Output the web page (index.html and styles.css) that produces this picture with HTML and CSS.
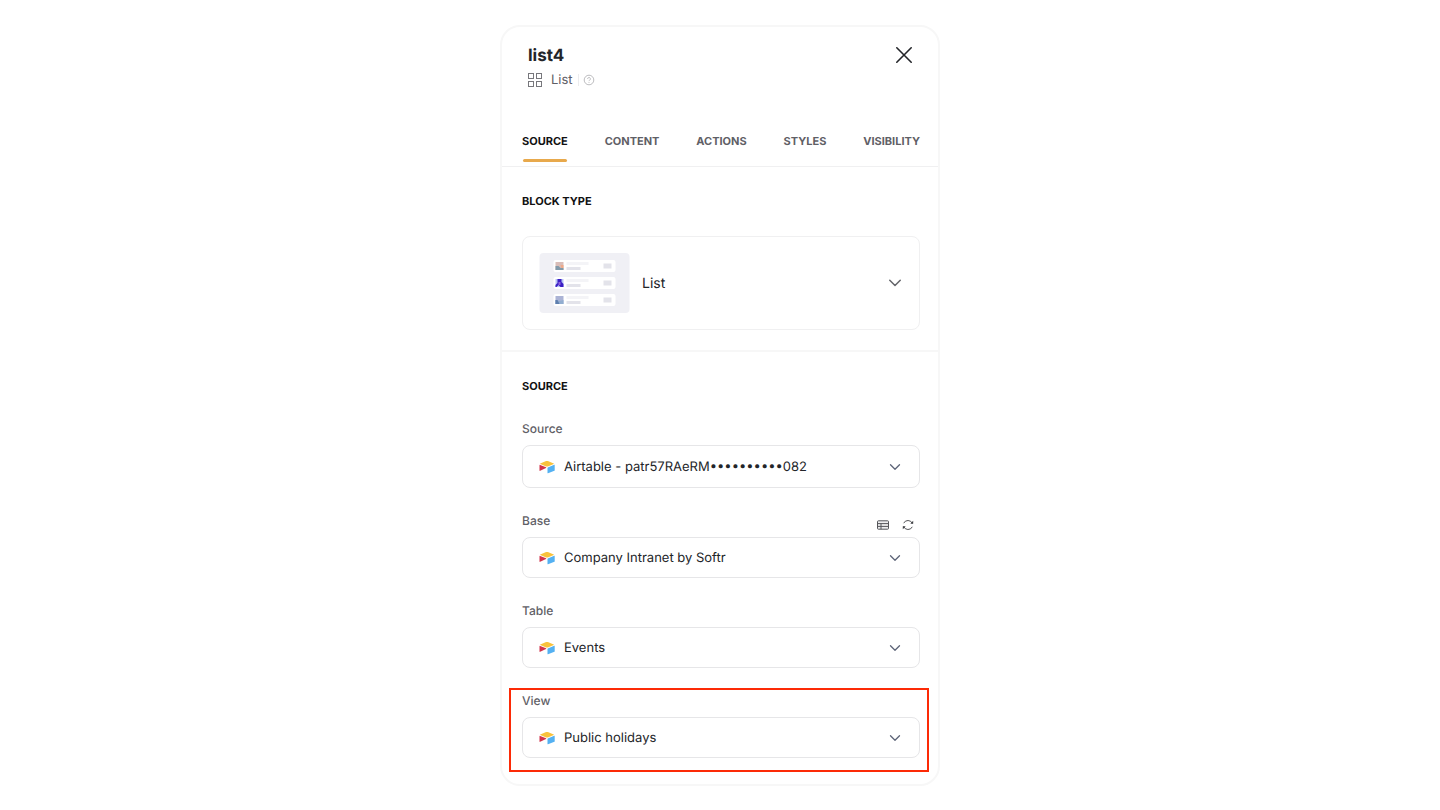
FILE: index.html
```html
<!DOCTYPE html>
<html lang="en">
<head>
  <meta charset="utf-8">
  <meta name="viewport" content="width=device-width, initial-scale=1.0">
  <title>list4</title>
  <link rel="stylesheet" href="styles.css">
</head>
<body>

  <!-- Shared icons -->
  <svg class="sprite" aria-hidden="true">
    <symbol id="airtable" viewBox="0 0 16 14">
      <path d="M7.1 1.1 1.3 3.4c-.4.2-.4.6 0 .7l5.8 2.3c.6.2 1.2.2 1.8 0l5.8-2.3c.4-.2.4-.6 0-.7L8.9 1.1a2.5 2.5 0 0 0-1.8 0z" fill="#f8c23c"/>
      <path d="M8.5 7.8v5.1c0 .3.3.5.5.4l6.4-2.5c.2-.1.3-.2.3-.4V5.2c0-.3-.3-.5-.5-.4L8.8 7.4c-.2.1-.3.2-.3.4z" fill="#54b1f2"/>
      <path d="M7 8 1.2 10.800c-.3.2-.7 0-.7-.4V5.300c0-.4.3-.6.7-.4L7 7.300c.4.200.4.500 0 .7z" fill="#d2324a"/>
    </symbol>
    <symbol id="chevron" viewBox="0 0 12 12">
      <path d="M1.500 3.700 6 8.200l4.500-4.500" fill="none" stroke="currentColor" stroke-width="1.300" stroke-linecap="round" stroke-linejoin="round"/>
    </symbol>
  </svg>

  <main class="panel">
    <header class="panel-header">
      <div>
        <h1>list4</h1>
        <div class="block-name">
          <svg class="grid-icon" viewBox="0 0 14 14" fill="none" stroke="#77777c">
            <rect x="0.500" y="0.500" width="5" height="5"/>
            <rect x="8.500" y="0.500" width="5" height="5"/>
            <rect x="0.500" y="8.500" width="5" height="5"/>
            <rect x="8.500" y="8.500" width="5" height="5"/>
          </svg>
          <span class="block-label">List</span>
          <button class="help" aria-label="Help">
            <svg viewBox="0 0 12 12" fill="none" stroke="#b4b4b8">
              <circle cx="6" cy="6" r="4.800" stroke-width="0.900"/>
              <path d="M4.600 4.900a1.400 1.400 0 1 1 2.100 1.200c-.5.300-.7.500-.7 1M6 8v.8" stroke-width="0.900"/>
            </svg>
          </button>
        </div>
      </div>
      <button class="close" aria-label="Close">
        <svg viewBox="0 0 18 18" fill="none" stroke="#232529" stroke-width="1.600" stroke-linecap="round">
          <path d="M1.800 1.800 16.200 16.200M16.200 1.800 1.800 16.200"/>
        </svg>
      </button>
    </header>

    <nav class="tabs">
      <button class="tab active">SOURCE</button>
      <button class="tab">CONTENT</button>
      <button class="tab">ACTIONS</button>
      <button class="tab">STYLES</button>
      <button class="tab">VISIBILITY</button>
    </nav>

    <section class="block-type">
      <h2><label for="block-type">BLOCK TYPE</label></h2>
      <div class="control card">
        <svg class="thumb" viewBox="0 0 90 60">
          <rect width="90" height="60" rx="4" fill="#f0f0f5"/>
          <g fill="#fff">
            <rect x="14" y="7" width="62" height="12" rx="2"/>
            <rect x="14" y="24" width="62" height="12" rx="2"/>
            <rect x="14" y="41" width="62" height="12" rx="2"/>
          </g>
          <g fill="#f4f4f7">
            <rect x="27" y="9" width="22" height="3"/>
            <rect x="27" y="26" width="22" height="3"/>
            <rect x="27" y="43" width="22" height="3"/>
          </g>
          <g fill="#e3e3ea">
            <rect x="27" y="14" width="14" height="3"/>
            <rect x="27" y="31" width="14" height="3"/>
            <rect x="27" y="48" width="14" height="3"/>
            <rect x="64" y="10.500" width="8" height="5"/>
            <rect x="64" y="27.500" width="8" height="5"/>
            <rect x="64" y="44.500" width="8" height="5"/>
          </g>
          <rect x="16" y="9" width="8" height="8" fill="#d9bdb7"/>
          <path d="M16 13h3l2 2h3v2h-8z" fill="#829aaa"/>
          <path d="M21 12h3v3h-2z" fill="#efa988"/>
          <rect x="16" y="26" width="8" height="8" fill="#b9c4f5"/>
          <path d="M18 26h4v3l2 2v3h-3l-2-2-2 2h-1v-2l2-2z" fill="#3b1fc4"/>
          <path d="M19 29h2v3h-2z" fill="#8f62dc"/>
          <rect x="16" y="43" width="8" height="8" fill="#abb3d5"/>
          <path d="M16 47l4 1 4-1v4h-8z" fill="#91aed0"/>
          <path d="M16 47h2l2 4h-4z" fill="#5e7fae"/>
        </svg>
        <select id="block-type"><option>List</option></select>
        <svg class="chevron large"><use href="#chevron"/></svg>
      </div>
    </section>

    <section class="source">
      <h2>SOURCE</h2>

      <div class="field">
        <div class="field-head"><label for="source">Source</label></div>
        <div class="control tall">
          <svg class="logo"><use href="#airtable"/></svg>
          <select id="source"><option>Airtable - patr57RAeRM••••••••••082</option></select>
          <svg class="chevron"><use href="#chevron"/></svg>
        </div>
      </div>

      <div class="field">
        <div class="field-head">
          <label for="base">Base</label>
          <div class="tools">
            <button aria-label="Open table">
              <svg viewBox="0 0 12 12" fill="none" stroke="#55565a">
                <rect x="0.500" y="1.800" width="11" height="8.400" rx="0.800" fill="#ededee"/>
                <path d="M.5 4.600h11M.5 7.400h11M4 4.600v5.600"/>
              </svg>
            </button>
            <button aria-label="Refresh">
              <svg viewBox="0 0 12 12" fill="none" stroke="#3f4044" stroke-width="0.900">
                <path d="M1.700 4.200A4.700 4.700 0 0 1 10.300 4.400M10.300 7.800A4.700 4.700 0 0 1 1.700 7.600"/>
                <path d="M11.200 1.800v3H8.300zM.8 10.200v-3h2.900z" fill="#3f4044" stroke="none"/>
              </svg>
            </button>
          </div>
        </div>
        <div class="control">
          <svg class="logo"><use href="#airtable"/></svg>
          <select id="base"><option>Company Intranet by Softr</option></select>
          <svg class="chevron"><use href="#chevron"/></svg>
        </div>
      </div>

      <div class="field">
        <div class="field-head"><label for="table">Table</label></div>
        <div class="control">
          <svg class="logo"><use href="#airtable"/></svg>
          <select id="table"><option>Events</option></select>
          <svg class="chevron"><use href="#chevron"/></svg>
        </div>
      </div>

      <div class="field highlight">
        <div class="field-head"><label for="view">View</label></div>
        <div class="control">
          <svg class="logo"><use href="#airtable"/></svg>
          <select id="view"><option>Public holidays</option></select>
          <svg class="chevron"><use href="#chevron"/></svg>
        </div>
      </div>
    </section>
  </main>

</body>
</html>
```

FILE: styles.css
```css
* {
  box-sizing: border-box;
}

body {
  margin: 0;
  padding: 25px 16px 24px;
  background-color: #fff;
  color: #232529;
  font-family: Inter, "Liberation Sans", sans-serif;
  font-size: 13px;
  text-rendering: geometricPrecision;
}

button,
select {
  color: inherit;
  font: inherit;
  text-rendering: inherit;
}

button {
  padding: 0;
  border: none;
  background: none;
  cursor: pointer;
}

svg {
  display: block;
}

.sprite {
  position: absolute;
  width: 0;
  height: 0;
}

.panel {
  max-width: 440px;
  margin: 0 auto;
  border: 2px solid #f7f7f7;
  border-radius: 20px;
}

/* Header */
.panel-header {
  display: flex;
  justify-content: space-between;
  align-items: flex-start;
  padding: 19px 25px 43px 26px;
}

h1 {
  margin: 0 0 4px;
  font-size: 17px;
  line-height: 20px;
  font-weight: 700;
}

.block-name {
  display: flex;
  align-items: center;
  height: 20px;
  color: #5f6066;
}

.grid-icon {
  width: 14px;
  height: 14px;
  margin-right: 9px;
}

.block-label {
  padding-right: 5px;
  border-right: 1px solid #ececee;
  line-height: 12px;
}

.help {
  margin-left: 4px;
}

.help svg {
  width: 12px;
  height: 12px;
}

.close svg {
  width: 18px;
  height: 18px;
}

/* Tabs */
.tabs {
  display: flex;
  justify-content: space-between;
  padding: 0 18px 4px 20px;
  border-bottom: 1px solid #f0f0f1;
}

.tab {
  position: relative;
  padding-bottom: 13px;
  color: #5f6066;
  font-size: 11px;
  line-height: 16px;
  font-weight: 700;
}

.tab.active {
  color: #111;
}

.tab.active::after {
  content: "";
  position: absolute;
  left: 1px;
  right: 1px;
  bottom: 0;
  height: 3px;
  border-radius: 2px;
  background-color: #e8a94c;
}

/* Sections */
section {
  padding: 26px 18px 0 20px;
}

h2 {
  margin: 0 0 27px;
  color: #111;
  font-size: 11px;
  line-height: 16px;
  font-weight: 700;
}

.block-type {
  padding-bottom: 20px;
  border-bottom: 2px solid #f7f7f7;
}

.source h2 {
  margin-bottom: 26px;
}

/* Fields */
.field {
  margin-bottom: 24px;
}

.field-head {
  display: flex;
  justify-content: space-between;
  height: 25px;
  color: #5f6066;
  font-size: 12px;
  line-height: 16px;
  font-weight: 500;
}

.field-head label {
  padding-top: 1px;
}

.tools {
  display: flex;
  align-items: center;
  gap: 13px;
  padding-right: 6px;
}

.tools svg {
  width: 12px;
  height: 12px;
}

.control {
  position: relative;
  height: 41px;
}

.control.tall {
  height: 43px;
}

.control.card {
  height: 94px;
}

select {
  appearance: none;
  width: 100%;
  height: 100%;
  padding: 0 40px 0 41px;
  border: 1px solid #e6e6e8;
  border-radius: 8px;
  background: transparent;
}

.card select {
  padding-left: 119px;
  border-color: #f0f0f1;
  font-size: 14px;
}

.logo,
.thumb,
.chevron {
  position: absolute;
  top: 0;
  bottom: 0;
  margin: auto 0;
  pointer-events: none;
}

.logo {
  left: 17px;
  width: 16px;
  height: 14px;
}

.thumb {
  left: 17px;
  width: 91px;
  height: 60px;
}

.chevron {
  right: 19px;
  width: 12px;
  height: 12px;
  color: #5d6478;
}

.chevron.large {
  right: 18px;
  width: 14px;
  height: 14px;
  color: #66676c;
}

.highlight {
  margin: -4px -9px 12px -13px;
  padding: 2px 7px 12px 11px;
  border: 2px solid #fc2a06;
}
```
